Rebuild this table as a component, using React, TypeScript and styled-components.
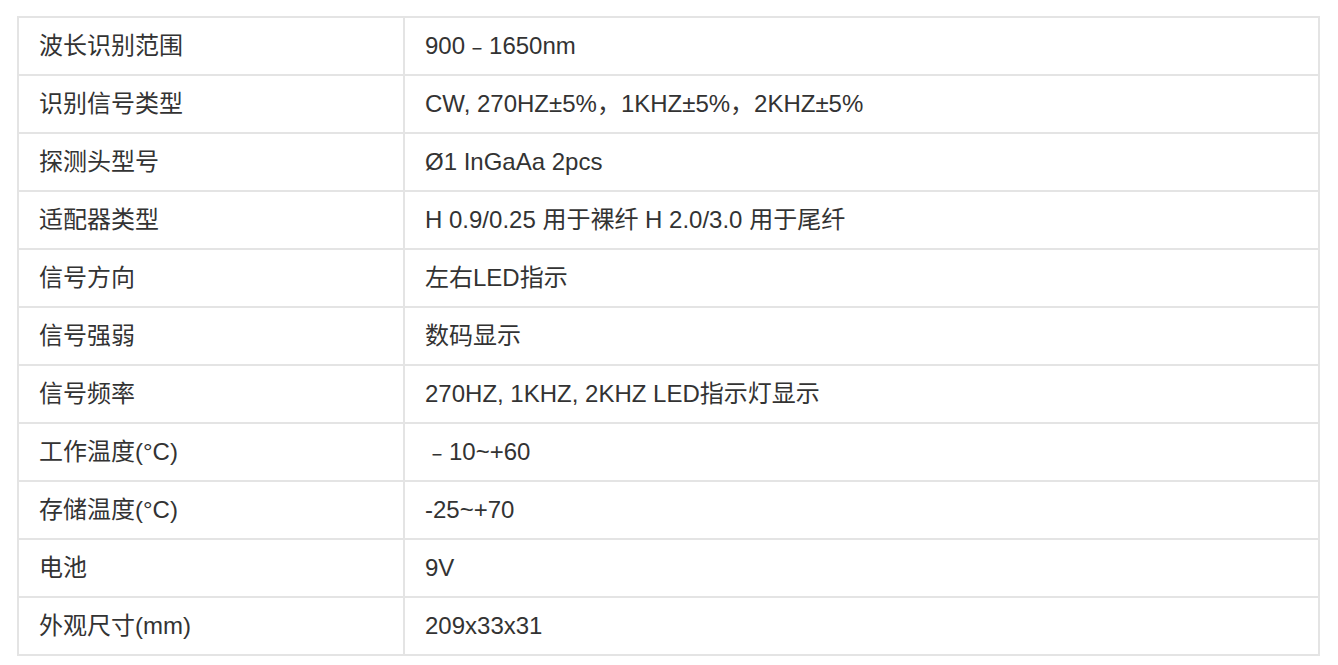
import styled, { createGlobalStyle } from 'styled-components'

type SpecRow = {
    label: string
    value: string
}

const specs: SpecRow[] = [
    { label: '波长识别范围', value: '900﹣1650nm' },
    { label: '识别信号类型', value: 'CW, 270HZ±5%，1KHZ±5%，2KHZ±5%' },
    { label: '探测头型号', value: 'Ø1 InGaAa 2pcs' },
    { label: '适配器类型', value: 'H 0.9/0.25 用于裸纤 H 2.0/3.0 用于尾纤' },
    { label: '信号方向', value: '左右LED指示' },
    { label: '信号强弱', value: '数码显示' },
    { label: '信号频率', value: '270HZ, 1KHZ, 2KHZ LED指示灯显示' },
    { label: '工作温度(°C)', value: '﹣10~+60' },
    { label: '存储温度(°C)', value: '-25~+70' },
    { label: '电池', value: '9V' },
    { label: '外观尺寸(mm)', value: '209x33x31' },
]

const GlobalStyle = createGlobalStyle`
    html, body {
        margin: 0;
        padding: 0;
        background: #ffffff;
    }
`

const Page = styled.div`
    padding: 16px 18px 0 17px;
    font-family: 'Liberation Sans', 'Noto Sans CJK SC', sans-serif;
    color: #333333;
`

const SpecTable = styled.table`
    width: 100%;
    border-collapse: collapse;
    table-layout: fixed;
    border: 2px solid #e4e4e4;
`

const Cell = styled.td`
    height: 56px;
    padding: 0 20px;
    border: 2px solid #e4e4e4;
    font-size: 24px;
    line-height: 34px;
    vertical-align: middle;
    white-space: nowrap;
`

export default function App() {
    return (
        <>
            <GlobalStyle />
            <Page>
                <SpecTable>
                    <colgroup>
                        <col style={{ width: 386 }} />
                        <col />
                    </colgroup>
                    <tbody>
                        {specs.map((row) => (
                            <tr key={row.label}>
                                <Cell>{row.label}</Cell>
                                <Cell>{row.value}</Cell>
                            </tr>
                        ))}
                    </tbody>
                </SpecTable>
            </Page>
        </>
    )
}
